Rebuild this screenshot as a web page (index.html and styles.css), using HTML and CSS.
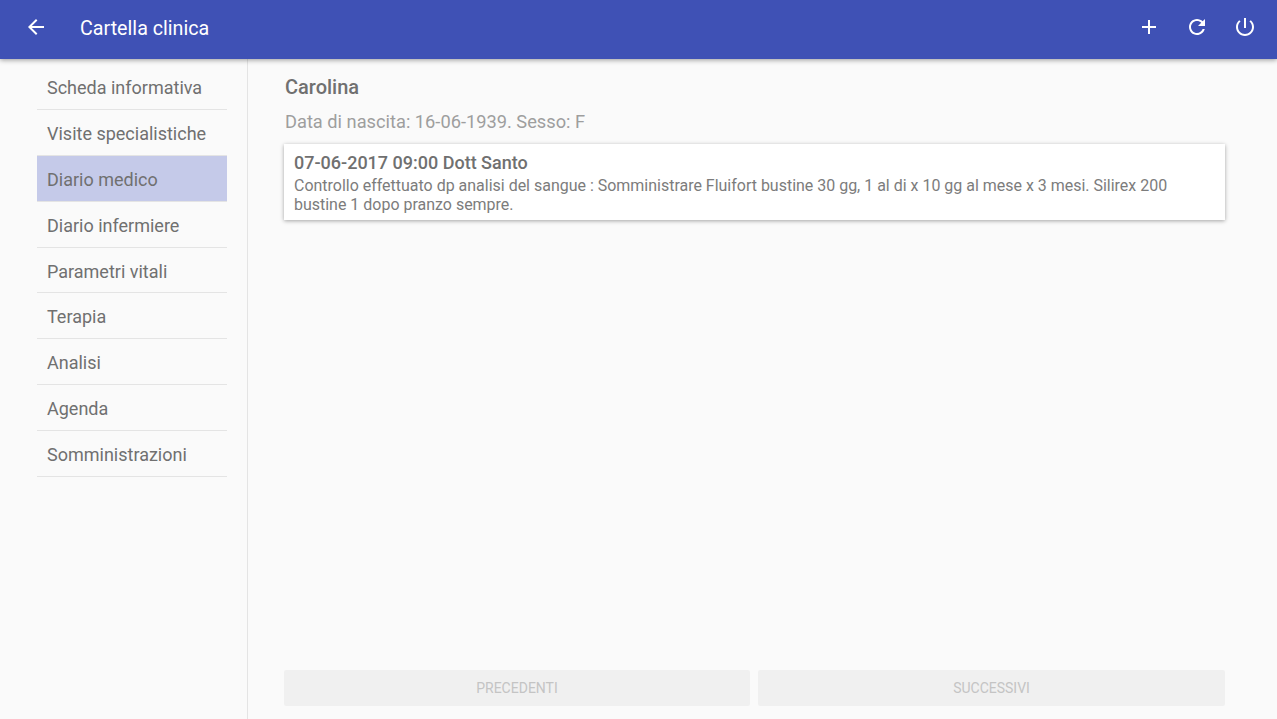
FILE: index.html
```html
<!DOCTYPE html>
<html lang="it">
<head>
    <meta charset="UTF-8">
    <meta name="viewport" content="width=device-width, initial-scale=1.0">
    <title>Cartella clinica</title>
    <link rel="stylesheet" href="styles.css">
</head>
<body>
    <header class="toolbar">
        <button class="icon-button back-button" aria-label="Indietro">
            <svg viewBox="0 0 24 24"><path d="M20 11H7.83l5.59-5.59L12 4l-8 8 8 8 1.41-1.41L7.83 13H20v-2z"/></svg>
        </button>
        <h1 class="toolbar-title">Cartella clinica</h1>
        <button class="icon-button" aria-label="Aggiungi">
            <svg viewBox="0 0 24 24"><path d="M19 13h-6v6h-2v-6H5v-2h6V5h2v6h6v2z"/></svg>
        </button>
        <button class="icon-button" aria-label="Aggiorna">
            <svg viewBox="0 0 24 24"><path d="M17.65 6.35C16.2 4.9 14.21 4 12 4c-4.42 0-7.99 3.58-7.99 8s3.57 8 7.99 8c3.73 0 6.84-2.55 7.73-6h-2.08c-.82 2.33-3.04 4-5.65 4-3.31 0-6-2.69-6-6s2.69-6 6-6c1.66 0 3.14.69 4.22 1.78L13 11h7V4l-2.35 2.35z"/></svg>
        </button>
        <button class="icon-button" aria-label="Esci">
            <svg viewBox="0 0 24 24"><path d="M13 3h-2v10h2V3zm4.83 2.17l-1.42 1.42C17.99 7.86 19 9.81 19 12c0 3.87-3.13 7-7 7s-7-3.13-7-7c0-2.19 1.01-4.14 2.58-5.42L6.17 5.17C4.23 6.82 3 9.26 3 12c0 4.97 4.03 9 9 9s9-4.03 9-9c0-2.74-1.23-5.18-3.17-6.83z"/></svg>
        </button>
    </header>

    <div class="layout">
        <nav class="sidebar">
            <a href="#">Scheda informativa</a>
            <a href="#">Visite specialistiche</a>
            <a href="#" class="active">Diario medico</a>
            <a href="#">Diario infermiere</a>
            <a href="#">Parametri vitali</a>
            <a href="#">Terapia</a>
            <a href="#">Analisi</a>
            <a href="#">Agenda</a>
            <a href="#">Somministrazioni</a>
        </nav>

        <main class="content">
            <h2 class="patient-name">Carolina</h2>
            <p class="patient-info">Data di nascita: 16-06-1939. Sesso: F</p>

            <article class="note">
                <h3>07-06-2017 09:00 Dott Santo</h3>
                <p>Controllo effettuato dp analisi del sangue : Somministrare Fluifort bustine 30 gg, 1 al di x 10 gg al mese x 3 mesi. Silirex 200 bustine 1 dopo pranzo sempre.</p>
            </article>

            <div class="pager">
                <button disabled>PRECEDENTI</button>
                <button disabled>SUCCESSIVI</button>
            </div>
        </main>
    </div>
</body>
</html>
```

FILE: styles.css
```css
* {
    box-sizing: border-box;
}

html, body {
    height: 100%;
}

body {
    margin: 0;
    display: flex;
    flex-direction: column;
    overflow: hidden;
    font-family: Roboto, "Liberation Sans", sans-serif;
    background-color: #fafafa;
    color: #707070;
}

.toolbar {
    position: relative;
    z-index: 2;
    display: flex;
    align-items: flex-start;
    flex: 0 0 59px;
    padding: 3px 8px 0 12px;
    background-color: #3f51b5;
    box-shadow: 0 1px 5px rgba(0, 0, 0, 0.4);
}

.toolbar-title {
    flex: 1;
    margin: 0 0 0 20px;
    font-size: 19.7px;
    font-weight: 400;
    line-height: 51px;
    color: #fff;
}

.icon-button {
    display: flex;
    align-items: center;
    justify-content: center;
    width: 48px;
    height: 48px;
    padding: 0;
    border: none;
    background: none;
}

.icon-button svg {
    width: 24px;
    height: 24px;
    fill: #fff;
}

.layout {
    display: flex;
    flex: 1;
    min-height: 0;
}

.sidebar {
    flex: 0 0 248px;
    padding: 5px 20px 0 37px;
    border-right: 1px solid #e4e4e4;
}

.sidebar a {
    display: block;
    height: 45.875px;
    padding-left: 10px;
    border-bottom: 1px solid #e4e4e4;
    font-size: 18px;
    line-height: 47px;
    color: #707070;
    text-decoration: none;
}

.sidebar a.active {
    background-color: #c5cae9;
}

.content {
    display: flex;
    flex: 1;
    flex-direction: column;
    min-width: 0;
    padding: 0 52px 13px 36px;
}

.patient-name {
    margin: 14px 0 0 1px;
    font-size: 20px;
    font-weight: 500;
    line-height: 28px;
    color: #707070;
}

.patient-info {
    margin: 7px 0 0 1px;
    font-size: 18.25px;
    line-height: 28px;
    color: #9e9e9e;
}

.note {
    margin-top: 8px;
    padding: 8px 10px 6px;
    background-color: #fff;
    box-shadow: 0 1px 4px rgba(0, 0, 0, 0.35);
}

.note h3 {
    margin: 0;
    font-size: 18px;
    font-weight: 500;
    line-height: 21px;
    color: #707070;
}

.note p {
    margin: 3px 0 0;
    font-size: 15.98px;
    line-height: 19px;
    color: #7c7c7c;
}

.pager {
    display: flex;
    gap: 8px;
    margin-top: auto;
}

.pager button {
    flex: 1;
    height: 36px;
    border: none;
    border-radius: 2px;
    background-color: #f0f0f0;
    font-family: inherit;
    font-size: 14px;
    color: #c4c4c4;
}

.pager button:first-child {
    flex: 0 0 466px;
}
```
